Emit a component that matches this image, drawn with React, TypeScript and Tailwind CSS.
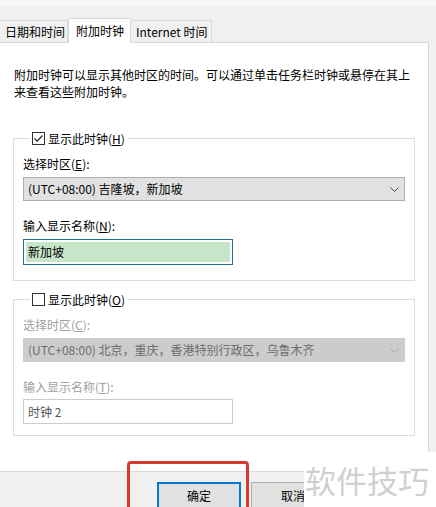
import React from 'react';

function Chevron({ color }: { color: string }) {
  return (
    <svg width="9" height="5" viewBox="0 0 9 5" fill="none">
      <path d="M0.5 0.5 L4.5 4.5 L8.5 0.5" stroke={color} strokeWidth="1" />
    </svg>
  );
}

function CheckBox({ checked }: { checked: boolean }) {
  return (
    <span className="flex h-[13px] w-[13px] items-center justify-center border border-[#333333] bg-white">
      {checked && (
        <svg width="11" height="11" viewBox="0 0 11 11" fill="none">
          <path d="M1.5 5.5 L4.2 8.2 L9.5 2.5" stroke="#222" strokeWidth="1.2" />
        </svg>
      )}
    </span>
  );
}

function ClockGroup({
  checked,
  keyShow,
  keyZone,
  keyName,
  zone,
  name,
  enabled,
  className,
}: {
  checked: boolean;
  keyShow: string;
  keyZone: string;
  keyName: string;
  zone: string;
  name: string;
  enabled: boolean;
  className: string;
}) {
  const label = enabled ? 'text-black' : 'text-[#a0a0a0]';
  return (
    <fieldset className={`ml-[13px] w-[402px] border border-[#dcdcdc] px-[9px] ${className}`}>
      <legend className="ml-[7px] flex items-center gap-[3px] bg-white px-[2px] leading-[17px] text-black">
        <CheckBox checked={checked} />
        <span>
          显示此时钟(<u>{keyShow}</u>)
        </span>
      </legend>
      <div className={`mt-[8px] leading-[17px] ${label}`}>
        选择时区(<u>{keyZone}</u>):
      </div>
      <div
        className={`mt-[5px] flex h-[24px] items-center justify-between border pl-[4px] pr-[5px] ${
          enabled ? 'border-[#adadad] bg-[#e1e1e1] text-black' : 'border-[#cccccc] bg-[#cccccc] text-[#6d6d6d]'
        }`}
      >
        <span>{zone}</span>
        <Chevron color={enabled ? '#444444' : '#a8a8a8'} />
      </div>
      <div className={`mt-[16px] leading-[17px] ${label}`}>
        输入显示名称(<u>{keyName}</u>):
      </div>
      {enabled ? (
        <div className="mt-[5px] flex h-[26px] w-[210px] items-center border border-[#1f7090] p-[2px]">
          <div className="flex h-full w-full items-center bg-[#c7e6c9] pl-[2px] text-black">{name}</div>
        </div>
      ) : (
        <div className="mt-[4px] flex h-[25px] w-[210px] items-center border border-[#cccccc] pl-[4px] text-[#555555]">
          {name}
        </div>
      )}
    </fieldset>
  );
}

export default function App() {
  return (
    <div className="relative h-[507px] w-[436px] overflow-hidden bg-[#f0f0f0] font-['Noto_Sans_CJK_SC','Noto_Sans',sans-serif] text-[12px] text-black">
      <div className="h-[6px] bg-[#f7f7f7]" />
      <div className="flex h-[36px] items-end">
        <div className="flex h-[22px] w-[68px] items-center border-r border-t border-[#d9d9d9] pl-[5px]">日期和时间</div>
        <div className="relative z-10 -mb-px flex h-[25px] w-[63px] items-center border-x border-t border-[#d9d9d9] bg-white pl-[7px]">
          附加时钟
        </div>
        <div className="flex h-[22px] w-[81px] items-center border-r border-t border-[#d9d9d9] pl-[5px]">Internet 时间</div>
      </div>
      <div className="h-[430px] w-[429px] border-y border-r border-[#d9d9d9] bg-white">
        <p className="pl-[14px] pt-[23px] leading-[17px]">
          附加时钟可以显示其他时区的时间。可以通过单击任务栏时钟或悬停在其上
          <br />
          来查看这些附加时钟。
        </p>
        <div className="h-[30px]" />
        <ClockGroup
          checked
          keyShow="H"
          keyZone="E"
          keyName="N"
          zone="(UTC+08:00) 吉隆坡，新加坡"
          name="新加坡"
          enabled
          className="pb-[15px]"
        />
        <ClockGroup
          checked={false}
          keyShow="O"
          keyZone="C"
          keyName="T"
          zone="(UTC+08:00) 北京，重庆，香港特别行政区，乌鲁木齐"
          name="时钟 2"
          enabled={false}
          className="mt-[10px] pb-[11px]"
        />
      </div>
      <div className="flex gap-[10px] pl-[157px] pt-[10px]">
        <button className="flex h-[28px] w-[84px] items-center justify-center border-2 border-[#0078d7] bg-[#e1e1e1]">
          确定
        </button>
        <button className="flex h-[28px] w-[84px] items-center justify-center border border-[#adadad] bg-[#e1e1e1]">
          取消
        </button>
      </div>

      <div className="absolute left-[127px] top-[461px] h-[60px] w-[122px] rounded-[4px] border-[3px] border-[#d63a2f]" />
      <div className="absolute left-[304px] top-[452px] flex h-[55px] w-[132px] items-center bg-white pl-[1px] text-[31px] leading-none text-[#cfcfcf]">
        软件技巧
      </div>
    </div>
  );
}
